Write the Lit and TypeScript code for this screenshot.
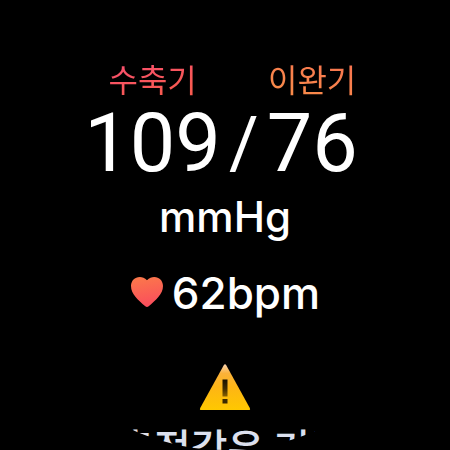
import { LitElement, html, css } from "lit";
import { customElement, property } from "lit/decorators.js";

@customElement("pressure-value")
class PressureValue extends LitElement {
  @property() label = "";
  @property() value = "";
  @property() tone = "systolic";

  static styles = css`
    :host {
      display: flex;
      flex-direction: column;
      align-items: center;
      gap: 6px;
    }
    .label {
      font: 400 32px/40px "Noto Sans CJK KR", sans-serif;
      color: transparent;
      background-clip: text;
      -webkit-background-clip: text;
    }
    .systolic {
      background-image: linear-gradient(165deg, #f94f70 10%, #f85a50 80%);
    }
    .diastolic {
      background-image: linear-gradient(15deg, #f98a4a 20%, #f87450 90%);
    }
    .value {
      font: 400 81px/80px Roboto, sans-serif;
      color: #fff;
    }
  `;

  render() {
    return html`
      <span class="label ${this.tone}">${this.label}</span>
      <span class="value">${this.value}</span>
    `;
  }
}

@customElement("app-root")
class AppRoot extends LitElement {
  static styles = css`
    :host {
      display: flex;
      justify-content: center;
      min-height: 100vh;
      background: #000;
      color: #fff;
    }
    .face {
      box-sizing: border-box;
      width: min(100vw, 100vh);
      height: min(100vw, 100vh);
      padding-top: 58px;
      display: flex;
      flex-direction: column;
      align-items: center;
      overflow: hidden;
      clip-path: circle(50%);
    }
    .pressure {
      display: flex;
      align-items: flex-end;
      gap: 8px;
      padding-right: 8px;
    }
    .slash {
      font: 400 72px/80px Roboto, sans-serif;
    }
    .unit {
      margin: 5px 0 0;
      font: 500 42px/56px Inter, sans-serif;
    }
    .pulse {
      display: flex;
      align-items: center;
      gap: 8px;
      margin: 18px 0 0;
      font: 500 44px/60px Inter, sans-serif;
    }
    .heart {
      width: 34px;
      height: 32px;
      margin-bottom: 2px;
    }
    .warning {
      flex: none;
      width: 52px;
      height: 48px;
      margin-top: 40px;
    }
    .note {
      flex: none;
      margin: 7px 0 0;
      padding-left: 14px;
      font: 500 40px/56px "Noto Sans CJK KR", sans-serif;
      color: #dce0ee;
      white-space: nowrap;
    }
  `;

  render() {
    return html`
      <main class="face">
        <div class="pressure">
          <pressure-value label="수축기" value="109" tone="systolic"></pressure-value>
          <span class="slash">/</span>
          <pressure-value label="이완기" value="76" tone="diastolic"></pressure-value>
        </div>
        <p class="unit">mmHg</p>
        <p class="pulse">
          <svg class="heart" viewBox="0 0 34 32" aria-hidden="true">
            <defs>
              <linearGradient id="heart" x1="0" y1="0" x2="0.2" y2="1">
                <stop offset="0" stop-color="#fb7a4a" />
                <stop offset="1" stop-color="#fa4f5c" />
              </linearGradient>
            </defs>
            <path
              fill="url(#heart)"
              d="M17 4.200C14.800 1.700 12.300 1 9.800 1C4.800 1 1 4.800 1 10C1 18 8 24 15.300 30.200Q17 31.600 18.700 30.200C26 24 33 18 33 10C33 4.800 29.200 1 24.200 1C21.700 1 19.200 1.700 17 4.200Z"
            />
          </svg>
          <span>62bpm</span>
        </p>
        <svg class="warning" viewBox="0 0 52 48" role="img" aria-label="주의">
          <defs>
            <linearGradient id="sign" x1="0" y1="0" x2="0" y2="1">
              <stop offset="0" stop-color="#fbd3b0" />
              <stop offset="0.2" stop-color="#fbb23a" />
              <stop offset="0.5" stop-color="#fdb515" />
              <stop offset="1" stop-color="#ffc800" />
            </linearGradient>
            <linearGradient id="mark" x1="0" y1="0" x2="0" y2="1">
              <stop offset="0" stop-color="#171000" />
              <stop offset="0.55" stop-color="#3f2b00" />
              <stop offset="1" stop-color="#8a6200" />
            </linearGradient>
          </defs>
          <path
            fill="url(#sign)"
            d="M24.600 2.400Q26 0 27.400 2.400L50.800 45Q51.600 47 50.500 47H1.500Q0.400 47 1.200 45Z"
          />
          <rect fill="url(#mark)" x="23.500" y="16.500" width="5" height="17" />
          <rect fill="#3a2900" x="23.500" y="36" width="5" height="4.500" />
        </svg>
        <p class="note">측정값은 기준</p>
      </main>
    `;
  }
}
